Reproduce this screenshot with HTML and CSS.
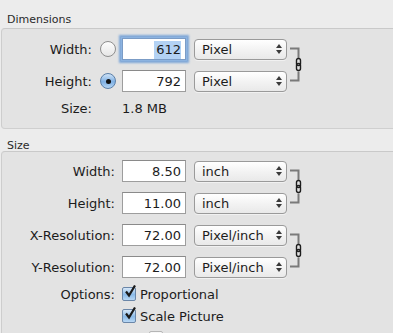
FILE: index.html
```html
<!DOCTYPE html>
<html lang="en">

<head>
    <meta charset="UTF-8">
    <meta name="viewport" content="width=device-width, initial-scale=1.0">
    <title>Adjust Size</title>
    <link rel="stylesheet" href="styles.css">
</head>

<body>
    <div class="section-title">Dimensions</div>
    <div class="group dims">
        <div class="linked">
            <div class="rows">
                <div class="row">
                    <span class="label">Width:</span>
                    <span class="radio"></span>
                    <div class="field focused"><span class="selected">612</span></div>
                    <div class="popup"><span>Pixel</span><span class="arrows"><i class="up"></i><i class="down"></i></span></div>
                </div>
                <div class="row">
                    <span class="label">Height:</span>
                    <span class="radio on"></span>
                    <div class="field">792</div>
                    <div class="popup"><span>Pixel</span><span class="arrows"><i class="up"></i><i class="down"></i></span></div>
                </div>
            </div>
            <svg class="chain" width="16" height="36" viewBox="0 0 16 36">
                <path d="M1 1.5H9.5V11.5M1 33.5H9.5V24.5" fill="none" stroke="#7a7a7a" stroke-width="2"/>
                <rect x="7.5" y="11.5" width="4" height="7" rx="2" fill="none" stroke="#1e1e1e" stroke-width="1.4"/>
                <rect x="7.5" y="16.5" width="4" height="7" rx="2" fill="none" stroke="#1e1e1e" stroke-width="1.4"/>
            </svg>
        </div>
        <div class="row short">
            <span class="label">Size:</span>
            <span class="value">1.8 MB</span>
        </div>
    </div>

    <div class="section-title">Size</div>
    <div class="group size">
        <div class="linked">
            <div class="rows">
                <div class="row">
                    <span class="label">Width:</span>
                    <div class="field">8.50</div>
                    <div class="popup"><span>inch</span><span class="arrows"><i class="up"></i><i class="down"></i></span></div>
                </div>
                <div class="row">
                    <span class="label">Height:</span>
                    <div class="field">11.00</div>
                    <div class="popup"><span>inch</span><span class="arrows"><i class="up"></i><i class="down"></i></span></div>
                </div>
            </div>
            <svg class="chain" width="16" height="36" viewBox="0 0 16 36">
                <path d="M1 1.5H9.5V11.5M1 33.5H9.5V24.5" fill="none" stroke="#7a7a7a" stroke-width="2"/>
                <rect x="7.5" y="11.5" width="4" height="7" rx="2" fill="none" stroke="#1e1e1e" stroke-width="1.4"/>
                <rect x="7.5" y="16.5" width="4" height="7" rx="2" fill="none" stroke="#1e1e1e" stroke-width="1.4"/>
            </svg>
        </div>
        <div class="linked">
            <div class="rows">
                <div class="row">
                    <span class="label">X-Resolution:</span>
                    <div class="field">72.00</div>
                    <div class="popup"><span>Pixel/inch</span><span class="arrows"><i class="up"></i><i class="down"></i></span></div>
                </div>
                <div class="row">
                    <span class="label">Y-Resolution:</span>
                    <div class="field">72.00</div>
                    <div class="popup"><span>Pixel/inch</span><span class="arrows"><i class="up"></i><i class="down"></i></span></div>
                </div>
            </div>
            <svg class="chain" width="16" height="36" viewBox="0 0 16 36">
                <path d="M1 1.5H9.5V11.5M1 33.5H9.5V24.5" fill="none" stroke="#7a7a7a" stroke-width="2"/>
                <rect x="7.5" y="11.5" width="4" height="7" rx="2" fill="none" stroke="#1e1e1e" stroke-width="1.4"/>
                <rect x="7.5" y="16.5" width="4" height="7" rx="2" fill="none" stroke="#1e1e1e" stroke-width="1.4"/>
            </svg>
        </div>
        <div class="row short">
            <span class="label">Options:</span>
            <span class="check on"><svg width="14" height="14" viewBox="0 0 14 14"><path d="M3 6.5L6 10.5L12 0.5" fill="none" stroke="#1a1a1a" stroke-width="2.2"/></svg></span>
            <span class="option">Proportional</span>
        </div>
        <div class="row short">
            <span class="label"></span>
            <span class="check on"><svg width="14" height="14" viewBox="0 0 14 14"><path d="M3 6.5L6 10.5L12 0.5" fill="none" stroke="#1a1a1a" stroke-width="2.2"/></svg></span>
            <span class="option">Scale Picture</span>
        </div>
        <div class="row short sub">
            <span class="label"></span>
            <span class="check off"></span>
            <span class="option dim">Scale proportionally to Mask</span>
        </div>
    </div>
</body>

</html>
```

FILE: styles.css
```css
* {
    margin: 0;
    padding: 0;
    box-sizing: border-box;
}

body {
    font-family: 'DejaVu Sans', sans-serif;
    font-size: 13px;
    color: #1c1c1c;
    background: #ececec;
    overflow: hidden;
    height: 333px;
}

.section-title {
    font-size: 11px;
    color: #2a2a2a;
    padding: 13px 0 0 7px;
    height: 28px;
}

.group {
    background: #e3e3e3;
    border-top: 1px solid #c9c9c9;
    border-left: 1px solid #cdcdcd;
    border-bottom: 1px solid #cfcfcf;
    border-radius: 4px 0 0 4px;
    margin-left: 1px;
    margin-right: -10px;
}

.group.dims {
    padding: 4px 0 9px;
}

.group.dims + .section-title {
    padding-top: 10px;
    height: 22px;
}

.group.size {
    padding-top: 3px;
    border-bottom: none;
    height: 200px;
}

.linked {
    display: flex;
    align-items: center;
}

.row {
    display: flex;
    align-items: center;
    height: 32px;
}

.row.short {
    height: 22px;
}

.label {
    text-align: right;
    white-space: nowrap;
}

.dims .label {
    width: 90px;
    margin-right: 8px;
}

.size .label {
    width: 113px;
    margin-right: 7px;
}

.radio {
    width: 16px;
    height: 16px;
    border-radius: 50%;
    border: 1px solid #8e8e8e;
    background: linear-gradient(#fdfdfd, #e6e6e6);
    margin-right: 6px;
    display: flex;
    justify-content: center;
    align-items: center;
}

.radio.on {
    border-color: #5b7fa8;
    background: linear-gradient(#cfe3f7, #7fb0e3 55%, #b4d5f5);
}

.radio.on::after {
    content: '';
    width: 5px;
    height: 5px;
    border-radius: 50%;
    background: #111;
}

.field {
    width: 64px;
    height: 22px;
    background: #fff;
    border: 1px solid #9d9d9d;
    border-top-color: #8a8a8a;
    text-align: right;
    padding: 3px 4px 0 0;
    margin-right: 8px;
}

.field.focused {
    box-shadow: 0 0 0 1px #8cb3e0, 0 0 2px 3px #7ea7d8;
    border-color: #7b9cc6;
}

.selected {
    background: #b3d2f4;
    padding: 1px 0 2px 2px;
}

.popup {
    width: 93px;
    height: 21px;
    border: 1px solid #9a9a9a;
    border-radius: 4px;
    background: linear-gradient(#ffffff, #f3f3f3 50%, #e9e9e9);
    display: flex;
    align-items: center;
    justify-content: space-between;
    padding: 0 4px 0 7px;
    box-shadow: 0 1px 0 rgba(255, 255, 255, 0.5);
}

.arrows {
    display: flex;
    flex-direction: column;
    gap: 2px;
}

.arrows i {
    width: 0;
    height: 0;
    border-left: 3px solid transparent;
    border-right: 3px solid transparent;
}

.arrows .up {
    border-bottom: 4px solid #3a3a3a;
}

.arrows .down {
    border-top: 4px solid #3a3a3a;
}

.chain {
    margin-left: 2px;
}

.value {
    margin-left: 22px;
}

.check {
    width: 14px;
    height: 14px;
    border: 1px solid #6a86a8;
    border-radius: 2px;
    background: linear-gradient(#d6e7f8, #8bbbe8 55%, #b8d7f4);
    margin-right: 4px;
    position: relative;
}

.check svg {
    position: absolute;
    left: 0;
    top: -3px;
}

.check.off {
    border-color: #b5b5b5;
    background: linear-gradient(#f8f8f8, #e8e8e8);
}

.sub .check {
    margin-left: 27px;
}

.dim {
    color: #9a9a9a;
}
```
